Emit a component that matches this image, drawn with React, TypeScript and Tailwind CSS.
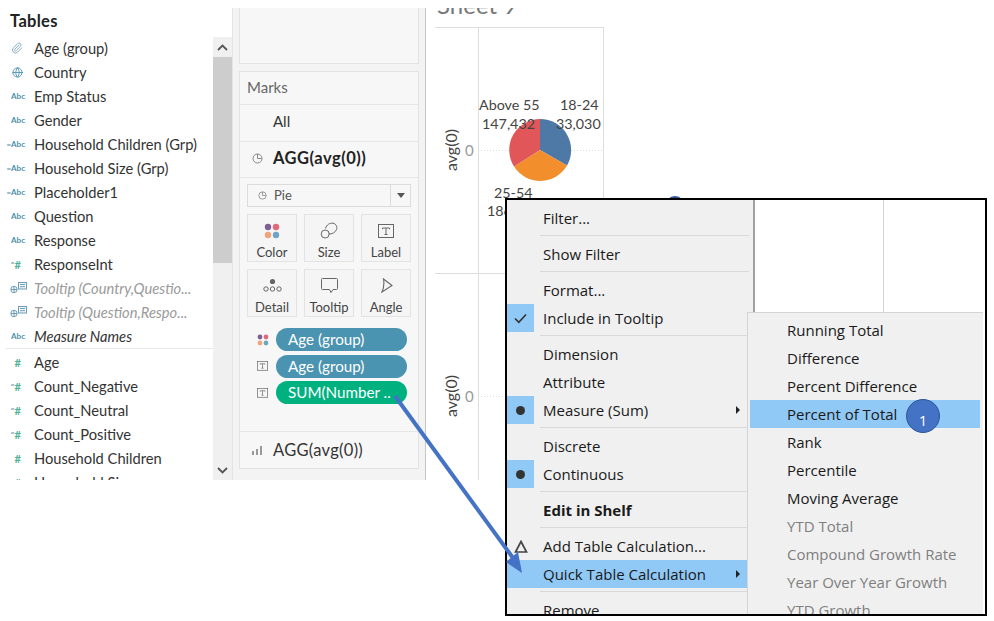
import type { ReactNode } from "react"
import { Paperclip, Globe } from "lucide-react"

const sans = "font-['Lato',sans-serif]"
const menuFont = "font-['Open_Sans',sans-serif]"

type Field = { label: string; icon: string; style?: "dim" | "italic" }

const dimensions: Field[] = [
  { label: "Age (group)", icon: "clip" },
  { label: "Country", icon: "globe" },
  { label: "Emp Status", icon: "abc" },
  { label: "Gender", icon: "abc" },
  { label: "Household Children (Grp)", icon: "=abc" },
  { label: "Household Size (Grp)", icon: "=abc" },
  { label: "Placeholder1", icon: "=abc" },
  { label: "Question", icon: "abc" },
  { label: "Response", icon: "abc" },
  { label: "ResponseInt", icon: "=#" },
  { label: "Tooltip (Country,Questio...", icon: "tip", style: "dim" },
  { label: "Tooltip (Question,Respo...", icon: "tip", style: "dim" },
  { label: "Measure Names", icon: "abc", style: "italic" },
]

const measures: Field[] = [
  { label: "Age", icon: "#" },
  { label: "Count_Negative", icon: "=#" },
  { label: "Count_Neutral", icon: "=#" },
  { label: "Count_Positive", icon: "=#" },
  { label: "Household Children", icon: "#" },
  { label: "Household Size", icon: "#" },
]

function FieldIcon({ kind }: { kind: string }) {
  if (kind === "clip") return <Paperclip size={12} strokeWidth={1.6} className="ml-[11px] text-[#6d9fb8]" />
  if (kind === "globe") return <Globe size={11} strokeWidth={2} className="ml-[12px] text-[#4f93b3]" />
  if (kind === "tip") {
    return (
      <svg width="17" height="12" viewBox="0 0 17 12" className="ml-[10px]" fill="none" stroke="#6b9db5" strokeWidth="1">
        <circle cx="4" cy="7.500" r="3.200" />
        <path d="M1 7.500h6M4 4.500v6" />
        <rect x="8.500" y="0.500" width="8" height="6.500" fill="#f4f8fa" />
        <path d="M10 2.500h5M10 4.700h5" />
      </svg>
    )
  }
  if (kind === "abc" || kind === "=abc") {
    return (
      <span className="flex w-[25px] justify-end text-[8px] leading-none font-bold text-[#4b8fab]">
        {kind === "=abc" ? "=Abc" : "Abc"}
      </span>
    )
  }
  return (
    <span className="flex w-[21px] justify-end text-[11px] leading-none font-bold text-[#4fb195]">
      {kind === "=#" && <span className="text-[7px] text-[#5b93ad]">=</span>}#
    </span>
  )
}

function FieldRow({ field }: { field: Field }) {
  const tone =
    field.style === "dim"
      ? "italic text-[#9a9a9a]"
      : field.style === "italic"
        ? "italic text-[#333333]"
        : "text-[#333333]"
  return (
    <div className="flex h-6 shrink-0 items-center">
      <div className="flex w-[34px] shrink-0 items-center">
        <FieldIcon kind={field.icon} />
      </div>
      <span className={`whitespace-nowrap text-[14.7px] ${tone}`}>{field.label}</span>
    </div>
  )
}

function DataPane() {
  return (
    <div className={`flex h-[480px] w-[233px] shrink-0 ${sans}`}>
      <div className="flex h-full w-[213px] flex-col overflow-hidden">
        <div className="h-[36px] shrink-0 pt-[12px] pl-[10px] text-[16.5px] leading-[18px] font-bold tracking-[0.3px] text-[#222222]">Tables</div>
        {dimensions.map((f) => (
          <FieldRow key={f.label} field={f} />
        ))}
        <div className="ml-[6px] h-[2px] shrink-0 border-t border-[#e8e8e8]" />
        {measures.map((f) => (
          <FieldRow key={f.label} field={f} />
        ))}
      </div>
      <div className="mt-[37px] flex w-[19px] flex-col bg-[#f0f0f0]">
        <div className="flex h-5 items-center justify-center">
          <svg width="11" height="7" viewBox="0 0 11 7" fill="none" stroke="#555" strokeWidth="1.8">
            <path d="M1 6l4.500-4.500L10 6" />
          </svg>
        </div>
        <div className="h-[206px] bg-[#cdcdcd]" />
        <div className="flex-1" />
        <div className="flex h-5 items-center justify-center">
          <svg width="11" height="7" viewBox="0 0 11 7" fill="none" stroke="#555" strokeWidth="1.8">
            <path d="M1 1l4.500 4.500L10 1" />
          </svg>
        </div>
      </div>
      <div className="mt-2 w-px bg-[#e4e4e4]" />
    </div>
  )
}

function ColorDots({ size = 16 }: { size?: number }) {
  return (
    <svg width={size} height={size} viewBox="0 0 16 16">
      <circle cx="4" cy="4" r="3.200" fill="#7f5f93" />
      <circle cx="12" cy="4" r="3.200" fill="#e2697c" />
      <circle cx="4" cy="12" r="3.200" fill="#f0a478" />
      <circle cx="12" cy="12" r="3.200" fill="#6fa5c4" />
    </svg>
  )
}

function TextBox({ size = 16 }: { size?: number }) {
  return (
    <svg width={size} height={size * 0.875} viewBox="0 0 16 14" fill="none">
      <rect x="0.500" y="0.500" width="15" height="13" stroke="#666" />
      <path d="M4.500 4h7M8 4v6.500M6.500 10.500h3M4.500 4v1.200M11.500 4v1.200" stroke="#666" />
    </svg>
  )
}

function MarkIcon({ name }: { name: string }) {
  if (name === "Color") return <ColorDots />
  if (name === "Label") return <TextBox />
  if (name === "Size") {
    return (
      <svg width="18" height="18" viewBox="0 0 18 18" fill="none" stroke="#666" strokeWidth="1">
        <path d="M5.500 6.500C6.500 2.500 10 0.800 13 1.200c3 0.500 4.500 3.500 3.500 6.300-1 2.800-4.500 4.800-7.700 4.500" />
        <circle cx="5.200" cy="12" r="4" />
      </svg>
    )
  }
  if (name === "Detail") {
    return (
      <svg width="19" height="15" viewBox="0 0 19 15" fill="none" stroke="#666">
        <circle cx="9.500" cy="3.500" r="2.600" fill="#666" stroke="none" />
        <circle cx="3" cy="11" r="2.200" />
        <circle cx="9.500" cy="11" r="2.200" />
        <circle cx="16" cy="11" r="2.200" />
      </svg>
    )
  }
  if (name === "Tooltip") {
    return (
      <svg width="17" height="16" viewBox="0 0 17 16" fill="none" stroke="#666">
        <path d="M1.500 0.500h14a1 1 0 0 1 1 1v9a1 1 0 0 1-1 1h-3.500l-2 3-1.500-3h-7a1 1 0 0 1-1-1v-9a1 1 0 0 1 1-1z" />
      </svg>
    )
  }
  return (
    <svg width="13" height="15" viewBox="0 0 13 15" fill="none" stroke="#666" strokeWidth="1.100">
      <path d="M3.500 1L12 7.500 2 14c1.800-4 2.300-8.500 1.500-13z" />
    </svg>
  )
}

function MarkCard({ name }: { name: string }) {
  return (
    <div className="flex h-[48px] w-[50px] shrink-0 flex-col items-center border border-[#e3e3e3] bg-[#f5f5f5] whitespace-nowrap">
      <div className="flex h-[29px] items-center pt-[2px]">
        <MarkIcon name={name} />
      </div>
      <span className="text-[13px] leading-[16px] text-[#444444]">{name}</span>
    </div>
  )
}

function PieGlyph({ size = 11 }: { size?: number }) {
  return (
    <svg width={size} height={size} viewBox="0 0 11 11" fill="none" stroke="#888">
      <circle cx="5.500" cy="5.500" r="4.500" />
      <path d="M5.500 1v4.500h4" />
    </svg>
  )
}

function Pill({ label, green, children }: { label: string; green?: boolean; children: ReactNode }) {
  return (
    <div className="flex h-[23px] items-center">
      <div className="flex w-[29px] justify-center pl-[2px]">{children}</div>
      <div
        className={`flex h-[23px] w-[131px] items-center rounded-full pl-3 text-[15.2px] whitespace-nowrap text-white ${
          green ? "bg-[#00b180]" : "bg-[#4a93b1]"
        }`}
      >
        {label}
      </div>
    </div>
  )
}

function MarksColumn() {
  return (
    <div className={`mt-2 flex h-[472px] w-[193px] shrink-0 flex-col gap-[7px] border-r border-[#c6c6c6] bg-[#f3f3f3] pl-[6px] ${sans}`}>
      <div className="h-[56px] w-[180px] border-x border-b border-[#e2e2e2] bg-[#f7f7f7]" />
      <div className="flex h-[398px] w-[180px] flex-col border border-[#e2e2e2] bg-[#f7f7f7]">
        <div className="flex h-[33px] items-center border-b border-[#e6e6e6] pb-[2px] pl-[7px] text-[15px] text-[#666666]">Marks</div>
        <div className="flex h-[37px] items-center border-b border-[#e6e6e6] pb-[2px] pl-[33px] text-[15px] text-[#333333]">All</div>
        <div className="flex h-[37px] items-center border-b border-[#e6e6e6] pb-[2px] text-[16.500px] font-bold tracking-[0.5px] text-[#222222]">
          <div className="flex w-[33px] justify-center pl-[2px]">
            <PieGlyph />
          </div>
          AGG(avg(0))
        </div>
        <div className="mx-[7px] mt-[6px] flex h-[23px] items-center border border-[#dcdcdc] bg-[#f7f7f7] text-[13px] text-[#555555]">
          <div className="flex w-[26px] justify-center pl-[2px]">
            <PieGlyph size={9} />
          </div>
          <span className="flex-1">Pie</span>
          <div className="flex h-full w-[20px] items-center justify-center border-l border-[#dcdcdc]">
            <div className="h-0 w-0 border-x-4 border-t-[5px] border-x-transparent border-t-[#555555]" />
          </div>
        </div>
        <div className="mx-[7px] mt-[7px] flex gap-[7px]">
          <MarkCard name="Color" />
          <MarkCard name="Size" />
          <MarkCard name="Label" />
        </div>
        <div className="mx-[7px] mt-[7px] flex gap-[7px]">
          <MarkCard name="Detail" />
          <MarkCard name="Tooltip" />
          <MarkCard name="Angle" />
        </div>
        <div className="mt-[11px] flex flex-col gap-[3.500px] pl-[7px]">
          <Pill label="Age (group)">
            <ColorDots size={12} />
          </Pill>
          <Pill label="Age (group)">
            <TextBox size={11} />
          </Pill>
          <Pill label="SUM(Number .." green>
            <TextBox size={11} />
          </Pill>
        </div>
        <div className="mt-[27px] flex h-[37px] items-center border-t border-[#e6e6e6] text-[16.500px] tracking-[0.3px] text-[#333333]">
          <div className="flex w-[33px] justify-center pl-[1px]">
            <svg width="10" height="9" viewBox="0 0 10 9" fill="#999">
              <rect x="0" y="5" width="2" height="4" />
              <rect x="4" y="3" width="2" height="6" />
              <rect x="8" y="0" width="2" height="9" />
            </svg>
          </div>
          AGG(avg(0))
        </div>
      </div>
    </div>
  )
}

function ChartCanvas() {
  // coordinates here are relative to the chart canvas, which starts at x=426, y=0
  return (
    <div className={`relative h-[480px] flex-1 overflow-hidden ${sans}`}>
      <div className="absolute top-2 left-0 h-[472px] w-full overflow-hidden">
        <div className="absolute top-[-19px] left-[11px] text-[24px] leading-[32px] whitespace-nowrap text-[#777777]">Sheet 9</div>
      </div>
      <svg className="absolute top-0 left-0" width="568" height="480" fill="none">
        <path d="M9 27.500h168M52.500 27V480M177.500 27V200M9 273.500h90" stroke="#dddddd" />
        <path d="M52 150.500h125M52 396.500h60" stroke="#dddddd" strokeDasharray="1 2" />
        <path d="M114 150V119A31 31 0 0 1 141 165.500Z" fill="#4e79a7" />
        <path d="M114 150L141 165.500A31 31 0 0 1 88 166.500Z" fill="#f28e2b" />
        <path d="M114 150L88 166.500A31 31 0 0 1 114 119Z" fill="#e15759" />
      </svg>
      <ChartLabel x={53} y={96} text="Above 55" />
      <ChartLabel x={56} y={115} text="147,432" />
      <ChartLabel x={134} y={96} text="18-24" />
      <ChartLabel x={130} y={115} text="33,030" />
      <ChartLabel x={68} y={184} text="25-54" />
      <ChartLabel x={61} y={202} text="186,344" />
      <AxisLabel y={150} />
      <AxisLabel y={396} />
    </div>
  )
}

function ChartLabel({ x, y, text }: { x: number; y: number; text: string }) {
  return (
    <div className="absolute text-[14.300px] leading-[18px] whitespace-nowrap text-[#444444]" style={{ left: x, top: y }}>
      {text}
    </div>
  )
}

function AxisLabel({ y }: { y: number }) {
  return (
    <>
      <div
        className="absolute left-[25px] -translate-x-1/2 -translate-y-1/2 -rotate-90 text-[16px] leading-[18px] whitespace-nowrap text-[#444444]"
        style={{ top: y }}
      >
        avg(0)
      </div>
      <div className="absolute left-[39px] -translate-y-1/2 text-[15px] leading-[18px] text-[#999999]" style={{ top: y }}>
        0
      </div>
    </>
  )
}

function MenuItem({ label, bold, mark, arrow, active }: { label: string; bold?: boolean; mark?: "check" | "dot" | "delta"; arrow?: boolean; active?: boolean }) {
  return (
    <div className={`flex h-7 shrink-0 items-center ${active ? "bg-[#90c8f6]" : ""}`}>
      <div className={`flex h-7 w-[27px] shrink-0 items-center justify-center ${mark && mark !== "delta" ? "bg-[#90c8f6]" : ""}`}>
        {mark === "check" && (
          <svg width="13" height="11" viewBox="0 0 13 11" fill="none" stroke="#333" strokeWidth="1.600">
            <path d="M1 5.500l3.800 3.800L12 1.500" />
          </svg>
        )}
        {mark === "dot" && <div className="h-[9px] w-[9px] rounded-full bg-[#333333]" />}
        {mark === "delta" && (
          <svg width="14" height="13" viewBox="0 0 14 13" fill="none" stroke="#444" strokeWidth="1.700">
            <path d="M7 1.500L12.500 12h-11z" />
          </svg>
        )}
      </div>
      <span className={`ml-[9px] flex-1 text-[15px] whitespace-nowrap text-[#1a1a1a] ${bold ? "font-bold" : ""}`}>{label}</span>
      {arrow && <div className="mr-[13px] h-0 w-0 border-y-4 border-l-[4px] border-y-transparent border-l-[#222222]" />}
    </div>
  )
}

function MenuSep() {
  return <div className="mt-[2px] mr-[4px] mb-[4px] ml-[33px] h-[2px] shrink-0 border-b border-[#d9d9d9]" />
}

const subItems = [
  { label: "Running Total" },
  { label: "Difference" },
  { label: "Percent Difference" },
  { label: "Percent of Total", active: true },
  { label: "Rank" },
  { label: "Percentile" },
  { label: "Moving Average" },
  { label: "YTD Total", off: true },
  { label: "Compound Growth Rate", off: true },
  { label: "Year Over Year Growth", off: true },
  { label: "YTD Growth", off: true },
]

function ContextMenu() {
  return (
    <div className={`absolute top-[198px] left-[505px] h-[418px] w-[482px] overflow-hidden border-2 border-black bg-white ${menuFont}`}>
      <div className="absolute top-0 left-[376px] h-[112px] w-px bg-[#d4d4d4]" />
      <div className="flex h-full w-[248px] flex-col border-r-2 border-[#a0a0a0] bg-[#f0f0f0] pt-[4px]">
        <MenuItem label="Filter..." />
        <MenuSep />
        <MenuItem label="Show Filter" />
        <MenuSep />
        <MenuItem label="Format..." />
        <MenuItem label="Include in Tooltip" mark="check" />
        <MenuSep />
        <MenuItem label="Dimension" />
        <MenuItem label="Attribute" />
        <MenuItem label="Measure (Sum)" mark="dot" arrow />
        <MenuSep />
        <MenuItem label="Discrete" />
        <MenuItem label="Continuous" mark="dot" />
        <MenuSep />
        <MenuItem label="Edit in Shelf" bold />
        <MenuSep />
        <MenuItem label="Add Table Calculation..." mark="delta" />
        <MenuItem label="Quick Table Calculation" arrow active />
        <MenuSep />
        <MenuItem label="Remove" />
      </div>
      <div className="absolute top-[112px] left-[240px] flex h-[306px] w-[236px] flex-col border-t border-l border-[#d4d4d4] bg-[#f0f0f0] pt-[3px] pr-[3px] pl-[2px]">
        {subItems.map((item) => (
          <div
            key={item.label}
            className={`flex h-7 shrink-0 items-center pl-[37px] text-[15px] whitespace-nowrap ${
              item.off ? "text-[#7f7f7f]" : "text-[#1a1a1a]"
            } ${item.active ? "bg-[#90c8f6]" : ""}`}
          >
            {item.label}
          </div>
        ))}
      </div>
      <div className="absolute top-[199px] left-[399px] flex h-[34px] w-[34px] items-center justify-center rounded-full border border-[#2f5597] bg-[#4472c4] pt-[8px] text-[15px] text-white">
        1
      </div>
    </div>
  )
}

export default function App() {
  return (
    <div className="relative h-[621px] w-[994px] overflow-hidden bg-white">
      <div className="flex items-start">
        <DataPane />
        <MarksColumn />
        <ChartCanvas />
      </div>
      <div className="absolute top-[196px] left-[665px] h-5 w-5 rounded-full bg-[#2f5597]" />
      <ContextMenu />
      <svg className="pointer-events-none absolute top-0 left-0" width="994" height="621" fill="none">
        <path d="M395 396L513 558" stroke="#4472c4" strokeWidth="4" />
        <path d="M522 573L506 562L518 552Z" fill="#4472c4" />
      </svg>
    </div>
  )
}
